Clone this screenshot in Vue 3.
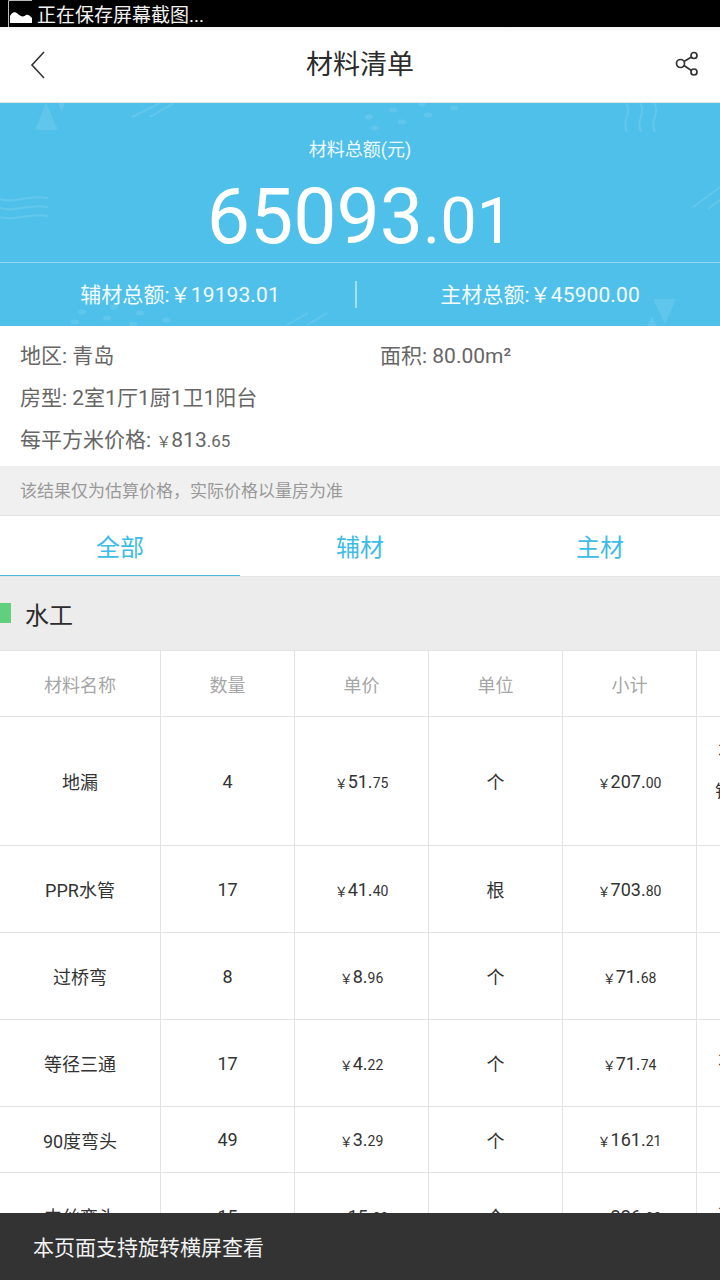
<script setup>
const rows = [
  { name: '地漏', qty: '4', price: ['51', '75'], unit: '个', total: ['207', '00'], h: 129, tick: true, extra: '钱' },
  { name: 'PPR水管', qty: '17', price: ['41', '40'], unit: '根', total: ['703', '80'], h: 87 },
  { name: '过桥弯', qty: '8', price: ['8', '96'], unit: '个', total: ['71', '68'], h: 87 },
  { name: '等径三通', qty: '17', price: ['4', '22'], unit: '个', total: ['71', '74'], h: 87, tick: true },
  { name: '90度弯头', qty: '49', price: ['3', '29'], unit: '个', total: ['161', '21'], h: 66 },
  { name: '内丝弯头', qty: '15', price: ['15', '00'], unit: '个', total: ['226', '00'], h: 87, tick: true },
]
</script>

<template>
  <div class="page">
    <div class="status">
      <svg class="shot" width="29" height="27" viewBox="0 0 29 27">
        <path d="M.5 27V.5H24" fill="none" stroke="#bbb" stroke-width="1" />
        <path d="M2 23V16C4 12 7 11 10 14C13 17 16 17 18 15C20 14 22 16 24 18V23Z" fill="#fff" />
      </svg>
      <span>正在保存屏幕截图...</span>
    </div>
    <header class="nav">
      <svg class="back" width="16" height="30" viewBox="0 0 16 30">
        <path d="M14 2 2 15 14 28" fill="none" stroke="#333" stroke-width="1.6" />
      </svg>
      <h1>材料清单</h1>
      <svg class="share" width="26" height="26" viewBox="0 0 26 26">
        <g fill="none" stroke="#333" stroke-width="1.7">
          <circle cx="6.5" cy="12.5" r="4" />
          <circle cx="20" cy="4.5" r="3" />
          <circle cx="20" cy="21" r="3" />
          <path d="M10 10.5 17.4 6M10 14.5l7.4 5" />
        </g>
      </svg>
    </header>

    <section class="hero">
      <svg class="decor" width="720" height="223" viewBox="0 0 720 223">
        <g fill="#fff" opacity=".1">
          <path d="M46 0 58 27H35Z" />
          <path d="M58 0h7l-3.500 9Z" />
          <path d="M653 196h23l-11 25Z" />
          <path d="M647 223l5-9 5 9Z" />
          <ellipse cx="393" cy="7" rx="4" ry="2.500" /><ellipse cx="369" cy="14" rx="4" ry="2.500" />
          <ellipse cx="402" cy="19" rx="4" ry="2.500" /><ellipse cx="428" cy="12" rx="4" ry="2.500" />
          <ellipse cx="375" cy="25" rx="4" ry="2.500" /><ellipse cx="454" cy="5" rx="4" ry="2.500" />
          <ellipse cx="422" cy="1" rx="4" ry="2" />
          <ellipse cx="82" cy="209" rx="4" ry="2.500" /><ellipse cx="114" cy="204" rx="4" ry="2.500" />
          <ellipse cx="107" cy="215" rx="4" ry="2.500" /><ellipse cx="140" cy="210" rx="4" ry="2.500" />
          <ellipse cx="166" cy="217" rx="4" ry="2.500" /><ellipse cx="75" cy="219" rx="4" ry="2.500" />
          <ellipse cx="133" cy="221" rx="4" ry="2.500" />
        </g>
        <g fill="none" stroke="#fff" stroke-width="2" opacity=".11">
          <path d="M0 96c16 5 28-5 48-1M0 105c16 5 28-5 48-1M0 114c16 5 28-5 48-1" />
          <path d="M626 0c7 10-5 17 1 29M640 0c7 10-5 17 1 29M654 0c7 10-5 17 1 29" />
          <path d="M132 14 160 0M150 14 174 0M287 222 308 210M307 222 327 210M693 104 720 84M708 106 720 97" />
        </g>
      </svg>
      <p class="hero-label">材料总额(元)</p>
      <p class="hero-total">65093<span>.01</span></p>
      <div class="hero-sub">
        <div>辅材总额:￥19193.01</div>
        <i></i>
        <div>主材总额:￥45900.00</div>
      </div>
    </section>

    <section class="info">
      <div class="info-row">
        <span>地区: 青岛</span>
        <span>面积: 80.00m²</span>
      </div>
      <div class="info-row"><span>房型: 2室1厅1厨1卫1阳台</span></div>
      <div class="info-row"><span>每平方米价格: <small class="yen">￥</small>813<small>.65</small></span></div>
    </section>
    <p class="notice">该结果仅为估算价格，实际价格以量房为准</p>

    <nav class="tabs">
      <div class="tab active">全部</div>
      <div class="tab">辅材</div>
      <div class="tab">主材</div>
    </nav>

    <div class="group"><i></i><span>水工</span></div>

    <div class="table">
      <div class="row head">
        <div class="cell c0">材料名称</div>
        <div class="cell">数量</div>
        <div class="cell">单价</div>
        <div class="cell">单位</div>
        <div class="cell">小计</div>
        <div class="cell last"></div>
      </div>
      <div v-for="r in rows" :key="r.name" class="row" :style="{ height: r.h + 'px' }">
        <div class="cell c0">{{ r.name }}</div>
        <div class="cell">{{ r.qty }}</div>
        <div class="cell"><span class="money"><small class="y">￥</small>{{ r.price[0] }}.<small>{{ r.price[1] }}</small></span></div>
        <div class="cell">{{ r.unit }}</div>
        <div class="cell"><span class="money"><small class="y">￥</small>{{ r.total[0] }}.<small>{{ r.total[1] }}</small></span></div>
        <div class="cell last" :class="{ two: r.extra }">
          <span v-if="r.tick" class="tick">不</span>
          <span v-if="r.extra">{{ r.extra }}</span>
        </div>
      </div>
    </div>

    <div class="toast">本页面支持旋转横屏查看</div>
  </div>
</template>

<style>
html, body { margin: 0; background: #fff; }
</style>

<style scoped>
.page {
  position: relative;
  width: 720px;
  height: 1280px;
  overflow: hidden;
  background: #fff;
  font-family: Roboto, "Noto Sans CJK SC", sans-serif;
  color: #333;
}
p, h1 { margin: 0; font-weight: 400; }
.status {
  height: 27px;
  background: #000;
  color: #f2f2f2;
  display: flex;
  align-items: flex-end;
  padding-left: 8px;
  font-size: 19px;
  line-height: 23px;
}
.shot { flex: none; }
.nav {
  height: 75px;
  display: flex;
  align-items: center;
  justify-content: space-between;
  padding: 0 20px 0 30px;
  border-bottom: 1px solid #e4e4e4;
  background: linear-gradient(#f2f2f2, #fff 5px);
}
.nav h1 {
  font-size: 27px;
  color: #2b2b2b;
  line-height: 36px;
}
.back { flex: none; }
.share { flex: none; margin-bottom: 2px; }
.hero {
  position: relative;
  height: 223px;
  background: #4fc0ea;
  color: #fff;
  text-align: center;
  overflow: hidden;
}
.decor { position: absolute; left: 0; top: 0; }
.hero-label {
  position: relative;
  padding-top: 35px;
  font-size: 18px;
  line-height: 24px;
  color: #eef9fd;
}
.hero-total {
  position: relative;
  height: 90px;
  font-size: 77px;
  line-height: 90px;
  margin-top: 10px;
  font-weight: 400;
}
.hero-total span { font-size: 65px; }
.hero-sub {
  position: relative;
  height: 60px;
  padding-bottom: 2px;
  box-sizing: content-box;
  border-top: 1px solid #93d8f1;
  display: flex;
  align-items: center;
  font-size: 21px;
  letter-spacing: .1px;
  color: #f3fbfe;
}
.hero-sub div { flex: 1; }
.hero-sub i {
  position: absolute;
  left: 355px;
  top: 18px;
  width: 2px;
  height: 27px;
  background: #a6def3;
}
.info {
  height: 140px;
  padding: 7px 0 0 20px;
  box-sizing: border-box;
  color: #666;
  font-size: 21px;
}
.info-row { display: flex; height: 42px; align-items: center; }
.info-row span:first-child { width: 360px; }
.info-row small { font-size: 17px; }
.info-row .yen { font-size: 15px; }
.notice {
  height: 50px;
  background: #f0f0f0;
  border-bottom: 1px solid #e3e3e3;
  box-sizing: border-box;
  padding: 0 20px;
  font-size: 17px;
  line-height: 50px;
  color: #999;
}
.tabs { display: flex; height: 60px; }
.tab {
  flex: 1;
  display: flex;
  align-items: center;
  justify-content: center;
  box-sizing: border-box;
  padding-bottom: 2px;
  font-size: 24px;
  color: #3dbce6;
}
.tab.active { border-bottom: 1px solid #4db8dc; padding-bottom: 1px; }
.group {
  height: 75px;
  background: #ececec;
  border-top: 1px solid #e3e3e3;
  border-bottom: 1px solid #e3e3e3;
  box-sizing: border-box;
  display: flex;
  align-items: center;
  font-size: 24px;
  color: #2b2b2b;
}
.group i { width: 11px; height: 20px; background: #60cf7e; margin: -1px 14px 0 0; }
.table { font-size: 18px; color: #333; }
.row {
  display: flex;
  box-sizing: border-box;
  border-bottom: 1px solid #e3e3e3;
}
.row.head { height: 66px; color: #a6a6a6; }
.cell {
  width: 134px;
  flex: none;
  box-sizing: border-box;
  border-right: 1px solid #e3e3e3;
  display: flex;
  align-items: center;
  justify-content: center;
}
.cell.c0 { width: 161px; }
.cell.last {
  border-right: 0;
  flex-direction: column;
  align-items: flex-start;
  padding-left: 18px;
}
.cell.last.two { padding-bottom: 16px; line-height: 37px; }
.tick { margin-left: 3px; transform: translateY(-2px); }
.money { font-size: 18px; }
.money small { font-size: 14px; }
.money .y { font-size: 13px; }
.toast {
  position: absolute;
  left: 0;
  right: 0;
  bottom: 0;
  height: 67px;
  box-sizing: border-box;
  padding: 0 0 2px 33px;
  background: #333;
  color: #f2f2f2;
  display: flex;
  align-items: center;
  font-size: 21px;
}
</style>
